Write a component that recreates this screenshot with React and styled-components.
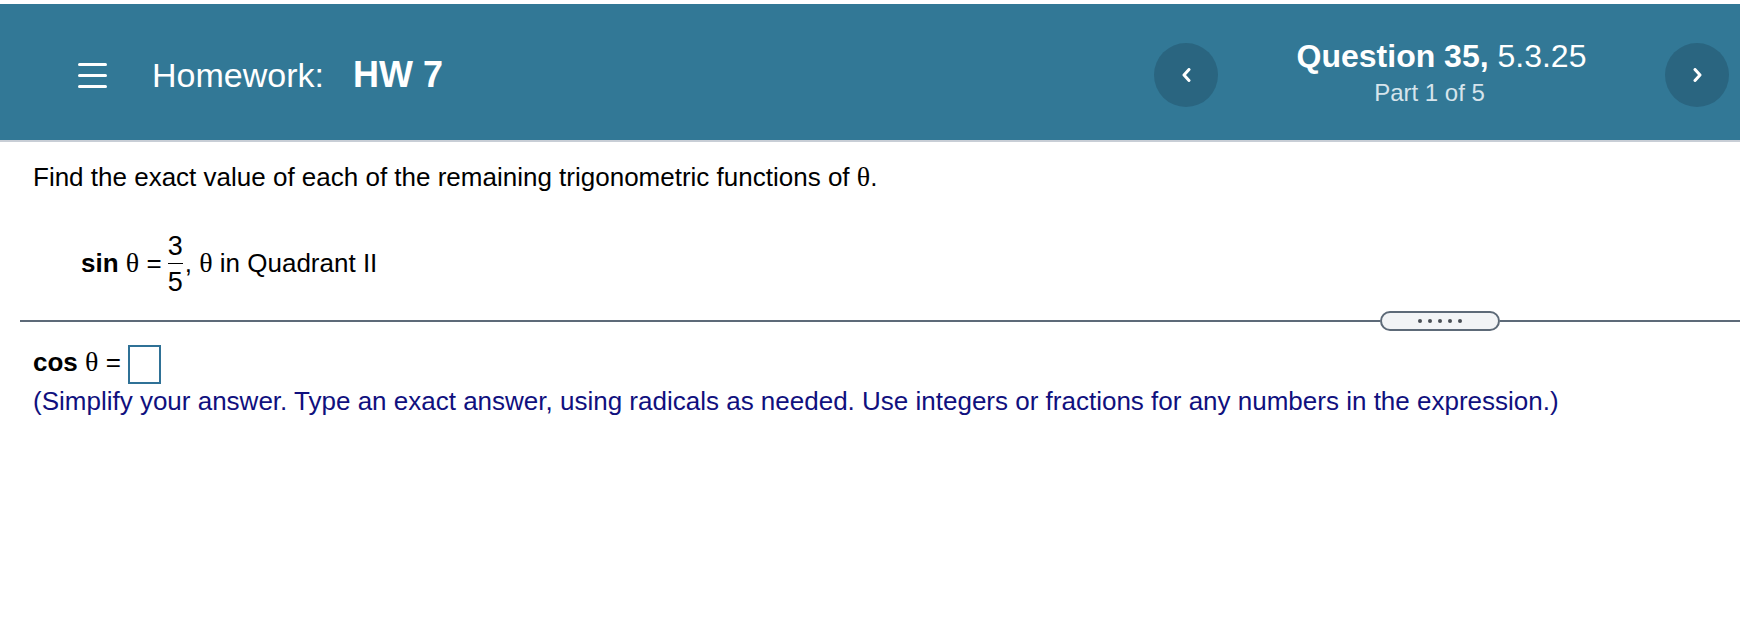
import React from 'react'
import styled, { createGlobalStyle } from 'styled-components'

const GlobalStyle = createGlobalStyle`
    body {
        margin: 0;
        background: #ffffff;
        font-family: "Liberation Sans", Arial, sans-serif;
        color: #000000;
    }
`

const Page = styled.div`
    padding-top: 4px;
`

const Header = styled.header`
    height: 130px;
    padding: 6px 11px 0 78px;
    background: #327896;
    border-bottom: 2px solid #c8ced6;
    display: flex;
    align-items: center;
    justify-content: space-between;
    color: #ffffff;
`

const Left = styled.div`
    display: flex;
    align-items: center;
    gap: 45px;
`

const Menu = styled.div`
    width: 29px;
    display: flex;
    flex-direction: column;
    gap: 8px;
    span {
        height: 3px;
        border-radius: 2px;
        background: #ffffff;
    }
`

const Title = styled.h1`
    margin: 0;
    font-size: 34px;
    font-weight: normal;
    line-height: 1;
    b {
        font-size: 36px;
        margin-left: 29px;
    }
`

const Nav = styled.div`
    display: flex;
    align-items: center;
`

const RoundButton = styled.button`
    width: 64px;
    height: 64px;
    border: none;
    border-radius: 50%;
    background: #2a6580;
    display: flex;
    align-items: center;
    justify-content: center;
    padding: 0;
`

const QuestionInfo = styled.div`
    width: 447px;
    padding-bottom: 5px;
    display: flex;
    flex-direction: column;
    align-items: center;
    gap: 5px;
`

const QuestionLine = styled.div`
    font-size: 32px;
    line-height: 36px;
    strong {
        font-weight: bold;
    }
`

const PartLine = styled.div`
    font-size: 24px;
    line-height: 28px;
    color: #d6e4ec;
    margin-left: -24px;
`

const Content = styled.main`
    padding: 20px 0 0 33px;
    font-size: 26px;
    line-height: 30px;
`

const Prompt = styled.p`
    margin: 0;
`

const Theta = styled.span`
    font-family: "Liberation Serif", "Times New Roman", serif;
    font-size: 28px;
`

const Given = styled.p`
    margin: 44px 0 0 48px;
    line-height: 30px;
`

const Fraction = styled.span`
    display: inline-flex;
    flex-direction: column;
    align-items: center;
    vertical-align: 17px;
    margin: 0 2px 0 6px;
    font-size: 27px;
    span {
        display: block;
        line-height: 20px;
    }
    i {
        display: block;
        align-self: stretch;
        height: 1px;
        margin: 7px 0 8px;
        background: #000000;
    }
`

const Divider = styled.div`
    margin: 19px 0 0 20px;
    display: flex;
    align-items: center;
`

const Rule = styled.div`
    height: 2px;
    background: #5d6a78;
    ${props => props.$grow ? 'flex: 1;' : `width: ${props.$width}px;`}
`

const Pill = styled.div`
    width: 116px;
    height: 16px;
    border: 2px solid #5d6a78;
    border-radius: 10px;
    background: #f2f4f6;
    display: flex;
    align-items: center;
    justify-content: center;
    gap: 6px;
    span {
        width: 4px;
        height: 4px;
        border-radius: 50%;
        background: #4a4f55;
    }
`

const Answer = styled.section`
    padding: 12px 0 0 33px;
    font-size: 26px;
    line-height: 38px;
`

const AnswerBox = styled.span`
    display: inline-block;
    width: 29px;
    height: 35px;
    border: 2px solid #2f7196;
    vertical-align: -13px;
    margin-left: 7px;
`

const Hint = styled.p`
    margin: 0;
    color: #10107e;
    line-height: 34px;
`

function Chevron({ dir }) {
    const d = dir === 'left' ? 'M7 1.5 L2 7 L7 12.5' : 'M2 1.5 L7 7 L2 12.5'
    return (
        <svg width="9" height="14" viewBox="0 0 9 14">
            <path d={d} fill="none" stroke="#ffffff" strokeWidth="3" strokeLinecap="round" strokeLinejoin="round" />
        </svg>
    )
}

export default function App() {
    return (
        <Page>
            <GlobalStyle />
            <Header>
                <Left>
                    <Menu>
                        <span />
                        <span />
                        <span />
                    </Menu>
                    <Title>Homework:<b>HW 7</b></Title>
                </Left>
                <Nav>
                    <RoundButton aria-label="Previous question"><Chevron dir="left" /></RoundButton>
                    <QuestionInfo>
                        <QuestionLine><strong>Question 35,</strong> 5.3.25</QuestionLine>
                        <PartLine>Part 1 of 5</PartLine>
                    </QuestionInfo>
                    <RoundButton aria-label="Next question"><Chevron dir="right" /></RoundButton>
                </Nav>
            </Header>

            <Content>
                <Prompt>Find the exact value of each of the remaining trigonometric functions of <Theta>θ</Theta>.</Prompt>
                <Given>
                    <b>sin</b> <Theta>θ</Theta> =
                    <Fraction>
                        <span>3</span>
                        <i />
                        <span>5</span>
                    </Fraction>
                    , <Theta>θ</Theta> in Quadrant II
                </Given>
            </Content>

            <Divider>
                <Rule $width={1360} />
                <Pill>
                    <span /><span /><span /><span /><span />
                </Pill>
                <Rule $grow />
            </Divider>

            <Answer>
                <div><b>cos</b> <Theta>θ</Theta> =<AnswerBox /></div>
                <Hint>(Simplify your answer. Type an exact answer, using radicals as needed. Use integers or fractions for any numbers in the expression.)</Hint>
            </Answer>
        </Page>
    )
}
